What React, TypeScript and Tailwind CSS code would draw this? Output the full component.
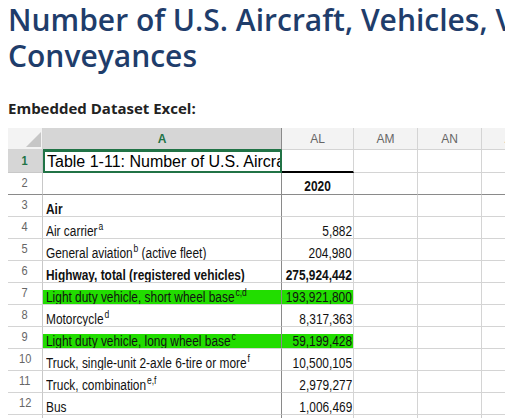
import React from "react";

type Row = {
  n: number;
  a: string;
  sup?: string;
  after?: string;
  al: string;
  bold?: boolean;
  hl?: boolean;
};

const rows: Row[] = [
  { n: 3, a: "Air", bold: true, al: "" },
  { n: 4, a: "Air carrier", sup: "a", al: "5,882" },
  { n: 5, a: "General aviation", sup: "b", after: " (active fleet)", al: "204,980" },
  { n: 6, a: "Highway, total (registered vehicles)", bold: true, al: "275,924,442" },
  { n: 7, a: "Light duty vehicle, short wheel base", sup: "c,d", al: "193,921,800", hl: true },
  { n: 8, a: "Motorcycle", sup: "d", al: "8,317,363" },
  { n: 9, a: "Light duty vehicle, long wheel base", sup: "c", al: "59,199,428", hl: true },
  { n: 10, a: "Truck, single-unit 2-axle 6-tire or more", sup: "f", al: "10,500,105" },
  { n: 11, a: "Truck, combination", sup: "e,f", al: "2,979,277" },
  { n: 12, a: "Bus", al: "1,006,469" },
  { n: 13, a: "", al: "" },
];

const cellFont = "font-['Liberation_Sans',sans-serif]";

// cell text in the sheet is drawn condensed
function Narrow({ children, origin = "origin-left" }: { children: React.ReactNode; origin?: string }) {
  return <span className={`inline-block whitespace-nowrap scale-x-[0.85] ${origin}`}>{children}</span>;
}

function HeaderRow() {
  return (
    <div className={`flex h-[22px] ${cellFont} text-[12px]`}>
      <div className="relative w-[35px] shrink-0 bg-[#f3f3f3] border-r border-b border-[#d4d4d4]">
        <svg className="absolute right-[1px] bottom-[2px]" width="15" height="15" viewBox="0 0 15 15">
          <polygon points="15,0 15,15 0,15" fill="#c6c6c6" />
        </svg>
      </div>
      <div className="w-[239px] shrink-0 flex items-center justify-center bg-[#d6d6d6] border-r border-r-[#8a8a8a] border-b border-b-[#217346] font-bold text-[#217346]">
        A
      </div>
      {["AL", "AM", "AN", "AO"].map((c, i) => (
        <div
          key={c}
          className={`${i === 0 ? "w-[72px]" : "w-[64px]"} shrink-0 flex items-center justify-center bg-[#f3f3f3] border-r border-b border-[#d4d4d4] text-[#666]`}
        >
          {c}
        </div>
      ))}
    </div>
  );
}

function EmptyCells({ dark }: { dark?: boolean }) {
  return (
    <>
      {[0, 1, 2].map((i) => (
        <div
          key={i}
          className={`w-[64px] shrink-0 border-r border-[#d4d4d4] border-b ${dark ? "border-b-[#8a8a8a]" : ""}`}
        />
      ))}
    </>
  );
}

export default function App() {
  return (
    <div className="h-[418px] overflow-hidden bg-white pl-2">
      <h1 className="pt-[2px] whitespace-nowrap font-['Open_Sans',sans-serif] font-semibold text-[30px] leading-[36px] text-[#1f3d6b]">
        Number of U.S. Aircraft, Vehicles, Vessels, and Other
        <br />
        Conveyances
      </h1>
      <p className="mt-[24px] font-['Open_Sans',sans-serif] font-bold text-[15px] leading-[20px] text-[#222]">
        Embedded Dataset Excel:
      </p>

      <div className="mt-[10px] flex flex-col w-[538px]">
        <HeaderRow />

        {/* row 1 */}
        <div className="flex h-[23px]">
          <div className={`w-[35px] shrink-0 flex items-end justify-center pb-[2px] bg-[#d6d6d6] border-r border-b border-[#c8c8c8] ${cellFont} font-bold text-[13px] text-[#217346]`}>
            <Narrow origin="origin-center">1</Narrow>
          </div>
          <div className={`w-[239px] shrink-0 flex items-center overflow-hidden whitespace-nowrap border-2 border-[#217346] pl-[2px] ${cellFont} text-[16px] text-black`}>
            Table 1-11: Number of U.S. Aircraft, Vehicles, Vessels, and Other Conveyances
          </div>
          <div className="w-[72px] shrink-0 border-r border-r-[#d4d4d4] border-b-2 border-b-black" />
          <EmptyCells />
        </div>

        {/* row 2 */}
        <div className="flex h-[22px]">
          <div className={`w-[35px] shrink-0 flex items-end justify-center pb-[2px] border-r border-r-[#c8c8c8] border-b border-b-[#8a8a8a] ${cellFont} text-[13px] text-[#666]`}>
            <Narrow origin="origin-center">2</Narrow>
          </div>
          <div className="w-[239px] shrink-0 border-r border-r-[#8a8a8a] border-b border-b-[#8a8a8a]" />
          <div className={`w-[72px] shrink-0 flex items-end justify-center pb-[1px] border-r border-r-[#d4d4d4] border-b border-b-[#8a8a8a] ${cellFont} font-bold text-[14px] leading-[14px] text-[#111]`}>
            <Narrow origin="origin-center">2020</Narrow>
          </div>
          <EmptyCells dark />
        </div>

        {rows.map((r) => (
          <div key={r.n} className="flex h-[22px]">
            <div className={`w-[35px] shrink-0 flex items-end justify-center pb-[2px] border-r border-r-[#c8c8c8] border-b border-b-[#d4d4d4] ${cellFont} text-[13px] text-[#666]`}>
              <Narrow origin="origin-center">{r.n}</Narrow>
            </div>
            <div className={`w-[239px] shrink-0 flex items-end overflow-hidden whitespace-nowrap border-r border-r-[#8a8a8a] border-b border-b-[#d4d4d4] ${cellFont} text-[14px] text-[#111] ${r.bold ? "font-bold" : ""}`}>
              <div className={`w-full h-[14px] leading-[14px] pl-[3px] ${r.hl ? "bg-[#22dd00]" : ""}`}>
                <Narrow>
                  {r.a}
                  {r.sup && <sup className="text-[10px] top-[-6px] ml-[1px]">{r.sup}</sup>}
                  {r.after}
                </Narrow>
              </div>
            </div>
            <div className={`w-[72px] shrink-0 flex items-end border-r border-r-[#d4d4d4] border-b border-b-[#d4d4d4] ${cellFont} text-[14px] text-[#111] ${r.bold ? "font-bold" : ""}`}>
              <div className={`w-full h-[14px] leading-[14px] pr-[1px] flex justify-end ${r.hl ? "bg-[#22dd00]" : ""}`}>
                <Narrow origin="origin-right">{r.al}</Narrow>
              </div>
            </div>
            <EmptyCells />
          </div>
        ))}
      </div>
    </div>
  );
}
